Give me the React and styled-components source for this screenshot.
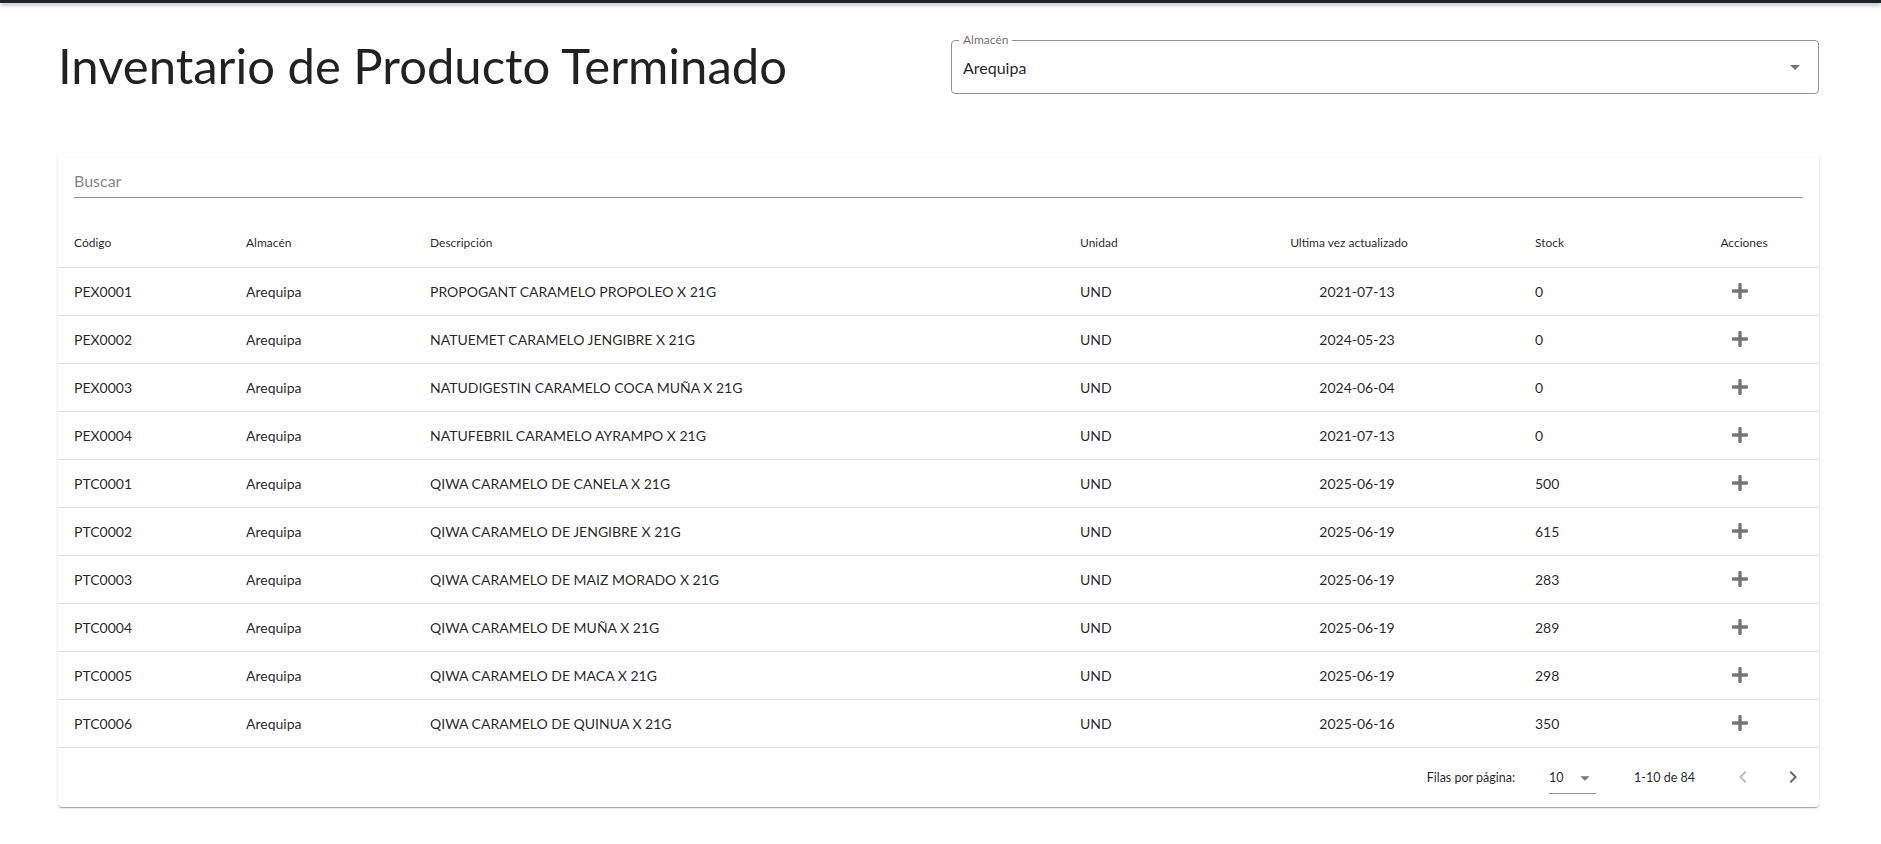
import React from "react";
import styled, { createGlobalStyle } from "styled-components";

const GlobalStyle = createGlobalStyle`
  html, body { margin: 0; padding: 0; background: #fff; }
  body { font-family: Lato, "Open Sans", sans-serif; color: rgba(0,0,0,0.87); }
  * { box-sizing: border-box; }
`;

const TopBar = styled.div`
  height: 3px;
  background: #1e2129;
  box-shadow: 0 2px 4px rgba(0,0,0,0.35);
`;

const Page = styled.main`
  padding: 0 62px 40px 58px;
`;

const Header = styled.header`
  display: flex;
  justify-content: space-between;
  align-items: flex-start;
  padding-top: 37px;
`;

const Title = styled.h1`
  margin: 0;
  font-size: 49px;
  line-height: 50px;
  font-weight: 400;
  color: rgba(0,0,0,0.87);
`;

const SelectBox = styled.div`
  position: relative;
  width: 868px;
  height: 54px;
  border: 1px solid rgba(0,0,0,0.42);
  border-radius: 4px;
  display: flex;
  align-items: center;
  justify-content: space-between;
  padding: 0 11px 0 11px;
`;

const FloatLabel = styled.span`
  position: absolute;
  top: -8px;
  left: 7px;
  padding: 0 4px;
  background: #fff;
  font-size: 12px;
  line-height: 14px;
  color: rgba(0,0,0,0.6);
`;

const SelectValue = styled.span`
  font-size: 16px;
  color: rgba(0,0,0,0.87);
`;

const Card = styled.section`
  margin-top: 59px;
  background: #fff;
  border-radius: 4px;
  box-shadow: 0 2px 1px -1px rgba(0,0,0,0.2), 0 1px 1px 0 rgba(0,0,0,0.14), 0 1px 3px 0 rgba(0,0,0,0.12);
`;

const SearchWrap = styled.div`
  padding: 12px 16px 0;
`;

const SearchInput = styled.div`
  height: 33px;
  border-bottom: 1px solid rgba(0,0,0,0.42);
  display: flex;
  align-items: center;
  font-size: 16px;
  color: rgba(0,0,0,0.5);
  padding-bottom: 1px;
`;

const Table = styled.table`
  width: 100%;
  margin-top: 20px;
  border-collapse: collapse;
  table-layout: fixed;
`;

const Th = styled.th`
  height: 49px;
  padding: 0 16px;
  font-size: 12px;
  font-weight: 400;
  color: rgba(0,0,0,0.87);
  text-align: ${(p) => (p.$center ? "center" : "left")};
  border-bottom: 1px solid rgba(224,224,224,1);
`;

const Td = styled.td`
  height: 48px;
  padding: 0 ${(p) => p.$pr ?? 16}px 0 ${(p) => p.$pl ?? 16}px;
  font-size: 14px;
  color: rgba(0,0,0,0.87);
  text-align: ${(p) => (p.$center ? "center" : "left")};
  border-bottom: 1px solid rgba(224,224,224,1);
  white-space: nowrap;
`;

const IconBtn = styled.button`
  border: 0;
  background: transparent;
  padding: 0;
  width: 32px;
  height: 32px;
  display: inline-flex;
  align-items: center;
  justify-content: center;
  cursor: pointer;
`;

const Pagination = styled.div`
  height: 59px;
  display: flex;
  align-items: center;
  justify-content: flex-end;
  padding-right: 6px;
  font-size: 12.5px;
  color: rgba(0,0,0,0.87);
`;

const PageLabel = styled.span`
  margin-right: 34px;
`;

const RowsSelect = styled.div`
  width: 47px;
  height: 32px;
  border-bottom: 1px solid rgba(0,0,0,0.42);
  display: flex;
  align-items: center;
  justify-content: space-between;
  margin-right: 38px;
  margin-top: 2px;
`;

const PageRange = styled.span`
  margin-right: 28px;
`;

const NavBtn = styled.button`
  border: 0;
  background: transparent;
  width: 40px;
  height: 40px;
  display: inline-flex;
  align-items: center;
  justify-content: center;
  padding: 0;
  margin-left: ${(p) => p.$gap || 0}px;
  color: ${(p) => (p.$disabled ? "rgba(0,0,0,0.26)" : "rgba(0,0,0,0.6)")};
`;

const ArrowDown = ({ size = 24 }) => (
  <svg width={size} height={size} viewBox="0 0 24 24" fill="rgba(0,0,0,0.54)">
    <path d="M7 10l5 5 5-5z" />
  </svg>
);

const Plus = () => (
  <svg width="16" height="16" viewBox="0 0 448 448" fill="#757575">
    <path d="M416 176H272V32c0-17.67-14.33-32-32-32h-32c-17.67 0-32 14.33-32 32v144H32c-17.67 0-32 14.330-32 32v32c0 17.67 14.33 32 32 32h144v144c0 17.67 14.33 32 32 32h32c17.67 0 32-14.33 32-32V272h144c17.67 0 32-14.33 32-32v-32c0-17.67-14.33-32-32-32z" />
  </svg>
);

const Chevron = ({ left }) => (
  <svg width="24" height="24" viewBox="0 0 24 24" fill="currentColor">
    {left ? (
      <path d="M15.41 7.41L14 6l-6 6 6 6 1.41-1.41L10.83 12z" />
    ) : (
      <path d="M10 6L8.59 7.41 13.17 12l-4.58 4.59L10 18l6-6z" />
    )}
  </svg>
);

const rows = [
  ["PEX0001", "PROPOGANT CARAMELO PROPOLEO X 21G", "2021-07-13", "0"],
  ["PEX0002", "NATUEMET CARAMELO JENGIBRE X 21G", "2024-05-23", "0"],
  ["PEX0003", "NATUDIGESTIN CARAMELO COCA MUÑA X 21G", "2024-06-04", "0"],
  ["PEX0004", "NATUFEBRIL CARAMELO AYRAMPO X 21G", "2021-07-13", "0"],
  ["PTC0001", "QIWA CARAMELO DE CANELA X 21G", "2025-06-19", "500"],
  ["PTC0002", "QIWA CARAMELO DE JENGIBRE X 21G", "2025-06-19", "615"],
  ["PTC0003", "QIWA CARAMELO DE MAIZ MORADO X 21G", "2025-06-19", "283"],
  ["PTC0004", "QIWA CARAMELO DE MUÑA X 21G", "2025-06-19", "289"],
  ["PTC0005", "QIWA CARAMELO DE MACA X 21G", "2025-06-19", "298"],
  ["PTC0006", "QIWA CARAMELO DE QUINUA X 21G", "2025-06-16", "350"],
];

export default function App() {
  return (
    <>
      <GlobalStyle />
      <TopBar />
      <Page>
        <Header>
          <Title>Inventario de Producto Terminado</Title>
          <SelectBox>
            <FloatLabel>Almacén</FloatLabel>
            <SelectValue>Arequipa</SelectValue>
            <ArrowDown />
          </SelectBox>
        </Header>
        <Card>
          <SearchWrap>
            <SearchInput>Buscar</SearchInput>
          </SearchWrap>
          <Table>
            <colgroup>
              <col style={{ width: 172 }} />
              <col style={{ width: 184 }} />
              <col style={{ width: 650 }} />
              <col style={{ width: 115 }} />
              <col style={{ width: 340 }} />
              <col style={{ width: 150 }} />
              <col style={{ width: 150 }} />
            </colgroup>
            <thead>
              <tr>
                <Th>Código</Th>
                <Th>Almacén</Th>
                <Th>Descripción</Th>
                <Th>Unidad</Th>
                <Th $center>Ultima vez actualizado</Th>
                <Th>Stock</Th>
                <Th $center>Acciones</Th>
              </tr>
            </thead>
            <tbody>
              {rows.map((r) => (
                <tr key={r[0]}>
                  <Td>{r[0]}</Td>
                  <Td>Arequipa</Td>
                  <Td>{r[1]}</Td>
                  <Td>UND</Td>
                  <Td $center $pl={32}>{r[2]}</Td>
                  <Td>{r[3]}</Td>
                  <Td $center $pr={24}>
                    <IconBtn aria-label="Agregar">
                      <Plus />
                    </IconBtn>
                  </Td>
                </tr>
              ))}
            </tbody>
          </Table>
          <Pagination>
            <PageLabel>Filas por página:</PageLabel>
            <RowsSelect>
              <span>10</span>
              <ArrowDown size={22} />
            </RowsSelect>
            <PageRange>1-10 de 84</PageRange>
            <NavBtn $disabled aria-label="Anterior">
              <Chevron left />
            </NavBtn>
            <NavBtn $gap={10} aria-label="Siguiente">
              <Chevron />
            </NavBtn>
          </Pagination>
        </Card>
      </Page>
    </>
  );
}
